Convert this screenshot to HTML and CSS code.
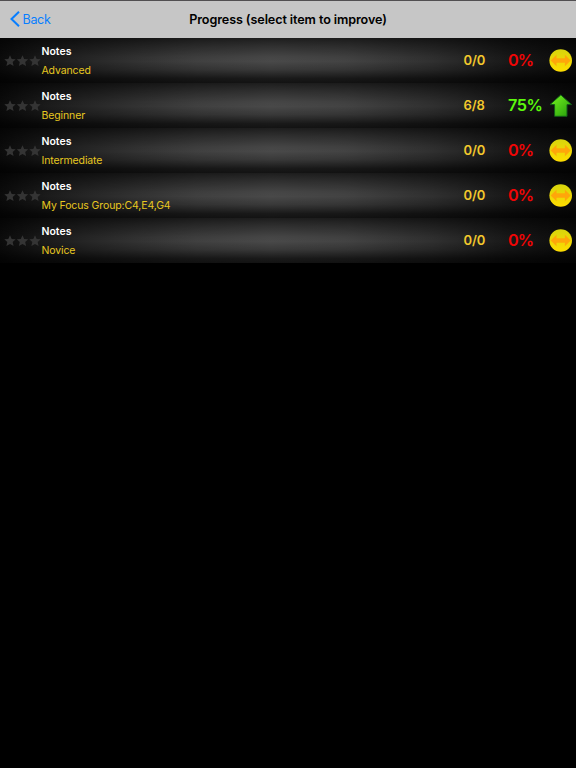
FILE: index.html
```html
<!DOCTYPE html>
<html lang="en">
<head>
<meta charset="utf-8">
<title>Progress</title>
<link rel="stylesheet" href="styles.css">
</head>
<body>
<svg class="defs" width="0" height="0" aria-hidden="true">
  <defs>
    <linearGradient id="gold" x1="0" y1="0" x2="0" y2="1"><stop offset="0" stop-color="#d8d50c"/><stop offset="1" stop-color="#ffdc00"/></linearGradient>
    <linearGradient id="leaf" x1="0" y1="0" x2="1" y2="1"><stop offset="0.2" stop-color="#68e51c"/><stop offset="1" stop-color="#239b0b"/></linearGradient>
    <symbol id="stars" viewBox="0 0 37 12">
      <path id="star" d="M6 .3 7.7 4 11.7 4.3 8.7 7 9.6 11 6 9 2.4 11 3.3 7 .3 4.3 4.3 4Z"/>
      <use href="#star" x="12.5"/><use href="#star" x="25"/>
    </symbol>
    <symbol id="steady" viewBox="0 0 24 24">
      <circle cx="11.7" cy="11.5" r="11.3" fill="url(#gold)"/>
      <path d="M1.7 11.5 7.5 5.7V9.3H15.9V5.7L21.7 11.5 15.9 17.3V13.7H7.5V17.3Z" fill="#ffa60a"/>
    </symbol>
    <symbol id="rise" viewBox="0 0 24 24">
      <path d="M11.8 .9 22.6 10.6H18V22.3H5.6V10.6H1Z" fill="url(#leaf)" stroke="#125d18" stroke-width="1"/>
    </symbol>
  </defs>
</svg>
<header class="bar">
  <a class="back"><svg width="10" height="16" viewBox="0 0 10 16"><path d="M9 .8 1.5 8 9 15.2"/></svg><span>Back</span></a>
  <h1>Progress (select item to improve)</h1>
</header>
<main>
  <div class="row"><svg class="stars"><use href="#stars"/></svg><div class="label"><b>Notes</b><span>Advanced</span></div><span class="score">0/0</span><span class="pct">0%</span><svg class="trend"><use href="#steady"/></svg></div>
  <div class="row"><svg class="stars"><use href="#stars"/></svg><div class="label"><b>Notes</b><span>Beginner</span></div><span class="score">6/8</span><span class="pct good">75%</span><svg class="trend"><use href="#rise"/></svg></div>
  <div class="row"><svg class="stars"><use href="#stars"/></svg><div class="label"><b>Notes</b><span>Intermediate</span></div><span class="score">0/0</span><span class="pct">0%</span><svg class="trend"><use href="#steady"/></svg></div>
  <div class="row"><svg class="stars"><use href="#stars"/></svg><div class="label"><b>Notes</b><span>My Focus Group:C4,E4,G4</span></div><span class="score">0/0</span><span class="pct">0%</span><svg class="trend"><use href="#steady"/></svg></div>
  <div class="row"><svg class="stars"><use href="#stars"/></svg><div class="label"><b>Notes</b><span>Novice</span></div><span class="score">0/0</span><span class="pct">0%</span><svg class="trend"><use href="#steady"/></svg></div>
</main>
</body>
</html>
```

FILE: styles.css
```css
* { box-sizing: border-box; }
body { margin: 0; background: #000; font-family: Inter, "Liberation Sans", sans-serif; height: 768px; overflow: hidden; }
.defs { display: block; }
.bar {
  height: 38px;
  display: grid;
  grid-template-columns: 1fr auto 1fr;
  align-items: center;
  padding-bottom: 1px;
  background: #c6c6c6;
  border-top: 1px solid #514f51;
}
.back { display: flex; align-items: center; gap: 3px; padding-left: 9.5px; color: #087eff; font-size: 12.5px; letter-spacing: -0.3px; }
.back path { fill: none; stroke: #087eff; stroke-width: 2; }
h1 { margin: 0; padding-top: 1px; font-size: 12.6px; line-height: 19px; font-weight: 600; letter-spacing: -0.1px; color: #000; }
.row {
  height: 45px;
  display: grid;
  grid-template-columns: 37.5px 422px 44.5px 41px 24px;
  align-items: center;
  padding-left: 4px;
  background:
    linear-gradient(rgba(0,0,0,.6), rgba(0,0,0,.35) 18%, rgba(0,0,0,.05) 42%, rgba(0,0,0,0) 52%, rgba(0,0,0,.22) 70%, rgba(0,0,0,.65) 90%, rgba(0,0,0,.74)),
    linear-gradient(90deg, #0b0b0b, #1b1b1b 8%, #2d2d2d 20%, #404040 34%, #494949 47%, #434343 60%, #303030 75%, #191919 88%, #0b0b0b);
}
.stars { width: 37px; height: 12px; fill: #343434; }
.label { display: flex; flex-direction: column; font-size: 10.5px; line-height: 19px; color: #e8c820; white-space: nowrap; letter-spacing: -0.12px; margin-top: 1px; }
.label b { color: #fff; font-weight: 600; letter-spacing: 0; }
.score { color: #f3c82c; font-size: 13px; font-weight: 600; letter-spacing: -0.15px; padding-bottom: 2px; }
.pct { color: #f00505; font-size: 16.3px; font-weight: 600; letter-spacing: -0.9px; padding-bottom: 2px; }
.pct.good { color: #5cf90c; letter-spacing: -0.5px; }
.trend { width: 24px; height: 24px; }
```
